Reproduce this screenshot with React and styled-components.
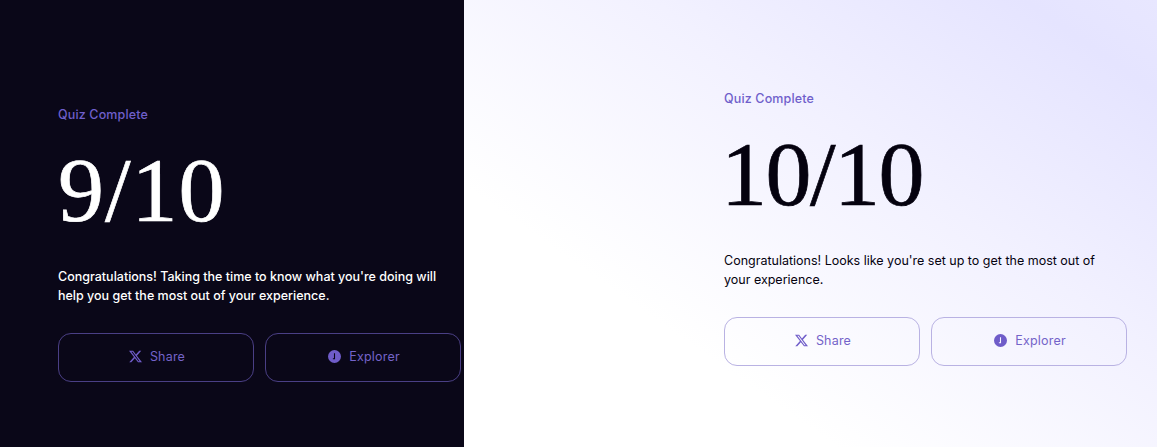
import styled, { createGlobalStyle } from "styled-components";

const GlobalStyle = createGlobalStyle`
    html, body {
        margin: 0;
        padding: 0;
        background: #fff;
    }
    body {
        font-family: Inter, "Liberation Sans", sans-serif;
    }
`;

const Page = styled.div`
    display: grid;
    grid-template-columns: 464px 1fr;
    width: 1157px;
    height: 447px;
    overflow: hidden;
`;

const Panel = styled.section`
    box-sizing: border-box;
    padding: ${(p) => (p.$dark ? "107px 0 0 58px" : "91px 0 0 260px")};
    background: ${(p) =>
        p.$dark
            ? "#0a0718"
            : "linear-gradient(215deg, #e8e7ff 0%, #e5e4ff 10%, #f2f1ff 38%, #ffffff 72%)"};
    color: ${(p) => (p.$dark ? "#ffffff" : "#05020f")};
`;

const Card = styled.div`
    width: 403px;
`;

const Label = styled.div`
    font-size: 12.5px;
    line-height: 15px;
    font-weight: 500;
    letter-spacing: 0.15px;
    color: #6f5fcb;
`;

const Score = styled.h1`
    margin: 15px 0 0 ${(p) => p.$inset};
    font-family: "Liberation Serif", serif;
    font-weight: 400;
    font-size: 92px;
    line-height: 106px;
    letter-spacing: ${(p) => p.$spacing};
    -webkit-text-stroke: 0.7px currentColor;
`;

const Message = styled.p`
    margin: 24px 0 0;
    width: 385px;
    font-size: 12.5px;
    line-height: 19px;
    font-weight: ${(p) => (p.$dark ? 500 : 400)};
`;

const Actions = styled.div`
    display: grid;
    grid-template-columns: 196px 196px;
    gap: 11px;
    margin-top: 28px;
`;

const ActionButton = styled.button`
    display: flex;
    align-items: center;
    justify-content: center;
    gap: 8px;
    height: 49px;
    padding: 0 0 2px 2px;
    border-radius: 13px;
    border: 1px solid ${(p) => (p.$dark ? "#4a3f85" : "#b9b2e3")};
    background: transparent;
    color: #7463c9;
    font-family: inherit;
    font-size: 12.5px;
    letter-spacing: 0.2px;
`;

const IconSvg = styled.svg`
    width: 13px;
    height: 13px;
    fill: #6f5cc9;
`;

const XIcon = () => (
    <IconSvg viewBox="0 0 24 24">
        <path d="M18.9 1.2h3.7l-8 9.2L24 22.8h-7.4l-5.8-7.6-6.6 7.6H.5l8.6-9.8L0 1.2h7.6l5.2 6.9zm-1.3 19.4h2L6.5 3.3H4.3z" />
    </IconSvg>
);

const ExplorerIcon = () => (
    <IconSvg viewBox="0 0 24 24">
        <path fillRule="evenodd" d="M12 0a12 12 0 1 0 0 24 12 12 0 0 0 0-24zm1 6h-2v9H9v2h4z" />
    </IconSvg>
);

const QuizResult = ({ dark, score, spacing, inset, message }) => (
    <Panel $dark={dark}>
        <Card>
            <Label>Quiz Complete</Label>
            <Score $spacing={spacing} $inset={inset}>{score}</Score>
            <Message $dark={dark}>{message}</Message>
            <Actions>
                <ActionButton $dark={dark}>
                    <XIcon />
                    Share
                </ActionButton>
                <ActionButton $dark={dark}>
                    <ExplorerIcon />
                    Explorer
                </ActionButton>
            </Actions>
        </Card>
    </Panel>
);

const App = () => (
    <>
        <GlobalStyle />
        <Page>
            <QuizResult
                dark
                score="9/10"
                spacing="1px"
                inset="0"
                message="Congratulations! Taking the time to know what you're doing will help you get the most out of your experience."
            />
            <QuizResult
                score="10/10"
                spacing="-1.500px"
                inset="-3px"
                message="Congratulations! Looks like you're set up to get the most out of your experience."
            />
        </Page>
    </>
);

export default App;
